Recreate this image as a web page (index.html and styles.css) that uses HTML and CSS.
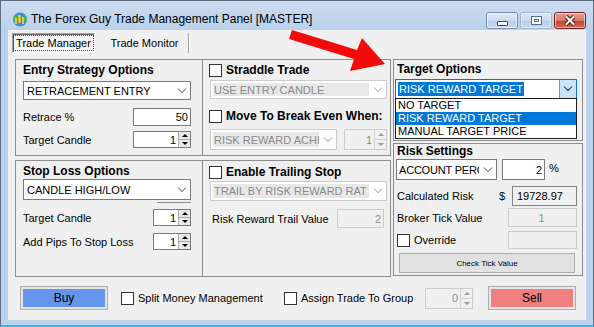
FILE: index.html
```html
<!doctype html>
<html lang="en">
  <head>
    <meta charset="UTF-8" />
    <title>The Forex Guy Trade Management Panel</title>
    <link rel="stylesheet" href="styles.css">
  </head>
  <body>
    <div class="window">
      <div class="titlebar">
        <svg class="app-icon" width="16" height="16" viewBox="0 0 16 16">
          <circle cx="8" cy="8.5" r="7" fill="#3f8fd0" />
          <path d="M2 6 Q6 3 9 5 Q12 7 14 5 L15 9 Q11 12 7 10 Q4 9 2 11 Z" fill="#4fb34a" />
          <rect x="3" y="7" width="2" height="6" fill="#f2c230" />
          <rect x="6.5" y="4" width="2" height="8" fill="#f7d548" />
          <rect x="10" y="6" width="2" height="7" fill="#f2c230" />
        </svg>
        <span class="title">The Forex Guy Trade Management Panel [MASTER]</span>
        <div class="caption">
          <span class="cbtn"><i class="glyph-min"></i></span>
          <span class="cbtn dim"><i class="glyph-max"></i></span>
          <span class="cbtn close">
            <svg width="14" height="11" viewBox="0 0 14 11">
              <path d="M3 1.5 L11 9.5 M11 1.5 L3 9.5" stroke="#4a1a18" stroke-width="4" />
              <path d="M3 1.5 L11 9.5 M11 1.5 L3 9.5" stroke="#fff" stroke-width="2" />
            </svg>
          </span>
        </div>
      </div>

      <div class="client">
        <div class="tabs">
          <span class="tab active"><span class="focus">Trade Manager</span></span>
          <span class="tab">Trade Monitor</span>
        </div>

        <div class="page">
          <div class="main">
            <div class="left">
              <!-- entry / straddle -->
              <div class="box split top">
                <div class="col entry">
                  <div class="heading">Entry Strategy Options</div>
                  <div class="combo c-entry"><span class="txt">RETRACEMENT ENTRY</span><span class="arr"></span></div>
                  <div class="row r-retrace">
                    <span>Retrace %</span>
                    <span class="tb w58">50</span>
                  </div>
                  <div class="row r-candle">
                    <span>Target Candle</span>
                    <span class="spin w58"><span class="val">1</span><span class="btns"><span class="up"></span><span class="down"></span></span></span>
                  </div>
                </div>
                <div class="col straddle">
                  <div class="chk-row"><span class="chk"></span><b>Straddle Trade</b></div>
                  <div class="combo dis c-wide"><span class="txt">USE ENTRY CANDLE</span><span class="arr"></span></div>
                  <div class="chk-row r-move"><span class="chk"></span><b>Move To Break Even When:</b></div>
                  <div class="row r-be">
                    <div class="combo dis c-be"><span class="txt">RISK REWARD ACHI</span><span class="arr"></span></div>
                    <span class="spin dis w43"><span class="val">1</span><span class="btns"><span class="up"></span><span class="down"></span></span></span>
                  </div>
                </div>
              </div>

              <!-- stop loss / trailing -->
              <div class="box split bottom">
                <div class="col stop">
                  <div class="heading">Stop Loss Options</div>
                  <div class="combo c-stop"><span class="txt">CANDLE HIGH/LOW</span><span class="arr"></span></div>
                  <div class="rule"></div>
                  <div class="row r-sl1">
                    <span>Target Candle</span>
                    <span class="spin w38"><span class="val">1</span><span class="btns"><span class="up"></span><span class="down"></span></span></span>
                  </div>
                  <div class="row r-sl2">
                    <span>Add Pips To Stop Loss</span>
                    <span class="spin w38"><span class="val">1</span><span class="btns"><span class="up"></span><span class="down"></span></span></span>
                  </div>
                </div>
                <div class="col trail">
                  <div class="chk-row"><span class="chk"></span><b>Enable Trailing Stop</b></div>
                  <div class="combo dis c-trail"><span class="txt">TRAIL BY RISK REWARD RAT</span><span class="arr"></span></div>
                  <div class="row r-trail">
                    <span class="lbl-trail">Risk Reward Trail Value</span>
                    <span class="tb dis w47">2</span>
                  </div>
                </div>
              </div>
            </div>

            <div class="right">
              <div class="box target">
                <div class="heading">Target Options</div>
                <div class="combo focused c-target">
                  <span class="txt"><span class="sel">RISK REWARD TARGET</span></span>
                  <span class="arr"></span>
                  <ul class="droplist">
                    <li>NO TARGET</li>
                    <li class="hot">RISK REWARD TARGET</li>
                    <li>MANUAL TARGET PRICE</li>
                  </ul>
                </div>
              </div>

              <div class="box risk">
                <div class="heading">Risk Settings</div>
                <div class="row r-acct">
                  <div class="combo c-acct"><span class="txt">ACCOUNT PERC</span><span class="arr"></span></div>
                  <span class="tb w43">2</span>
                  <span class="pct">%</span>
                </div>
                <div class="row r-calc">
                  <span>Calculated Risk</span>
                  <span class="dollar">$</span>
                  <span class="tb ro w65">19728.97</span>
                </div>
                <div class="row r-tick">
                  <span>Broker Tick Value</span>
                  <span class="tb dis center w69">1</span>
                </div>
                <div class="row r-over">
                  <span class="chk"></span><span class="lbl-over">Override</span>
                  <span class="tb dis w69"></span>
                </div>
                <div class="btn-small">Check Tick Value</div>
              </div>
            </div>
          </div>

          <div class="actions">
            <span class="btn buy"><span>Buy</span></span>
            <span class="opt split-mm"><span class="chk"></span>Split Money Management</span>
            <span class="opt assign"><span class="chk"></span>Assign Trade To Group</span>
            <span class="spin dis w48"><span class="val">0</span><span class="btns"><span class="up"></span><span class="down"></span></span></span>
            <span class="btn sell"><span>Sell</span></span>
          </div>
        </div>
      </div>

      <!-- callout arrow -->
      <svg class="arrow" width="594" height="327" viewBox="0 0 594 327">
        <polygon points="292,30 289,39 354,59 350,71 385,64 362,38 357,50" fill="#f50a0a" />
      </svg>
    </div>
  </body>
</html>
```

FILE: styles.css
```css
* {
  box-sizing: border-box;
}

body {
  margin: 0;
  background: #fff;
  font-family: "Liberation Sans", Arial, sans-serif;
  font-size: 11px;
  color: #000;
}

/* window frame */
.window {
  position: relative;
  width: 594px;
  height: 327px;
  border: 1px solid #5d6c80;
  border-bottom: 2px solid #22c4e2;
  background: linear-gradient(to bottom, #cbdcf0 0, #b9d1ea 30px, #b9d1ea 100%);
  padding: 0 7px 5px 7px;
  display: flex;
  flex-direction: column;
}

.titlebar {
  height: 29px;
  flex: none;
  display: flex;
  align-items: center;
  padding-top: 7px;
}

.app-icon {
  margin-left: 4px;
  flex: none;
}

.title {
  margin-left: 3px;
  font-size: 12px;
  color: #000;
}

.caption {
  margin-left: auto;
  display: flex;
  gap: 2px;
  margin-top: 2px;
}

.cbtn {
  width: 32px;
  height: 17px;
  border: 1px solid #7890b0;
  border-radius: 3px;
  background: linear-gradient(to bottom, #e3ecf7 0, #cbdaee 50%, #b8cde8 51%, #c9daef 100%);
  box-shadow: inset 0 0 0 1px rgba(255, 255, 255, 0.55);
  display: flex;
  align-items: center;
  justify-content: center;
}

.cbtn.dim {
  border-color: #9bb0cc;
  opacity: 0.85;
}

.cbtn.close {
  border-color: #6e2424;
  background: linear-gradient(to bottom, #e8a194 0, #d9786a 50%, #c4402f 51%, #d16a55 100%);
}

.glyph-min {
  display: block;
  width: 11px;
  height: 5px;
  margin-top: 6px;
  background: #fff;
  border: 1px solid #354763;
  border-radius: 1px;
}

.glyph-max {
  display: block;
  width: 11px;
  height: 9px;
  background: #fff;
  border: 1px solid #4a5c78;
  box-shadow: inset 0 0 0 2px #fff, inset 0 0 0 3px #4a5c78;
}

/* client area */
.client {
  flex: 1;
  background: #f0f0f0;
  display: flex;
  flex-direction: column;
}

.tabs {
  height: 24px;
  flex: none;
  display: flex;
  padding-top: 3px;
}

.tab {
  height: 20px;
  display: flex;
  align-items: center;
  justify-content: center;
  font-size: 11px;
}

.tab.active {
  width: 83px;
  margin-left: 4px;
  border: 1px solid;
  border-color: #a0a0a0 #fff #fff #a0a0a0;
  box-shadow: inset 1px 1px 0 #696969;
  background: #f4f4f4;
}

.tab.active .focus {
  outline: 1px dotted #444;
  outline-offset: 1px;
  padding: 0 1px;
}

.tab:not(.active) {
  width: 88px;
  margin-left: 6px;
  border-right: 1px solid #a0a0a0;
  box-shadow: 1px 0 0 #fff;
}

.page {
  padding: 5px 0 0 7px;
}

.main {
  display: grid;
  grid-template-columns: 376px 190px;
  column-gap: 2px;
}

.left {
  display: flex;
  flex-direction: column;
  gap: 4px;
}

.right {
  display: flex;
  flex-direction: column;
  gap: 2px;
}

.box {
  border: 1px solid #8c8c8c;
}

.box.split {
  display: grid;
  grid-template-columns: 186px 1fr;
}

.box.split .col + .col {
  border-left: 1px solid #8c8c8c;
}

.box.top {
  height: 97px;
}

.box.bottom {
  height: 117px;
}

.heading {
  font-size: 12px;
  font-weight: bold;
  line-height: 14px;
  height: 14px;
  white-space: nowrap;
}

.row {
  display: flex;
  align-items: center;
  justify-content: space-between;
}

.chk-row {
  height: 14px;
  display: flex;
  align-items: center;
}

.chk-row b {
  font-size: 12px;
  margin-left: 4px;
  white-space: nowrap;
}

.chk {
  width: 13px;
  height: 13px;
  flex: none;
  border: 1px solid #333;
  background: #fff;
}

/* combo boxes */
.combo {
  display: flex;
  align-items: stretch;
  border: 1px solid #7a7a7a;
  background: #fff;
  white-space: nowrap;
}

.combo .txt {
  flex: 1;
  min-width: 0;
  overflow: hidden;
  display: flex;
  align-items: center;
  padding-left: 3px;
}

.combo .arr {
  width: 17px;
  flex: none;
  display: flex;
  align-items: center;
  justify-content: center;
}

.combo .arr::after {
  content: "";
  width: 5px;
  height: 5px;
  margin-top: -4px;
  border-right: 1px solid #7c7c7c;
  border-bottom: 1px solid #7c7c7c;
  transform: rotate(45deg);
}

.combo.dis {
  border-color: #cccccc;
}

.combo.dis .txt {
  margin: 2px 0 2px 2px;
  padding-left: 1px;
  background: #e8e8e8;
  color: #8a8a8a;
}

.combo.dis .arr::after {
  border-color: #b8b8b8;
}

.combo.focused {
  position: relative;
  border-color: #0078d7;
}

.combo.focused .txt {
  padding-left: 2px;
}

.combo.focused .sel {
  background: #0078d7;
  color: #fff;
  padding: 1px 1px;
}

.combo.focused .arr {
  background: #cce4f7;
  border-left: 1px solid #569de5;
}

.combo.focused .arr::after {
  border-color: #333;
}

.droplist {
  position: absolute;
  top: 100%;
  left: -1px;
  right: -1px;
  margin: 0;
  padding: 0;
  list-style: none;
  background: #fff;
  border: 1px solid #1d1d1d;
  z-index: 5;
}

.droplist li {
  height: 13px;
  line-height: 13px;
  padding-left: 2px;
}

.droplist li.hot {
  background: #0078d7;
  color: #fff;
}

/* text boxes and spinners */
.tb {
  height: 100%;
  display: flex;
  align-items: center;
  justify-content: flex-end;
  padding-right: 2px;
  border: 1px solid #7a7a7a;
  background: #fff;
}

.tb.ro {
  justify-content: flex-start;
  padding-left: 4px;
  background: #f0f0f0;
  border-color: #828282;
}

.tb.dis {
  background: #f0f0f0;
  border-color: #cccccc;
  color: #8a8a8a;
}

.tb.center {
  justify-content: center;
}

.spin {
  height: 100%;
  display: flex;
  border: 1px solid #7a7a7a;
  background: #fff;
}

.spin .val {
  flex: 1;
  display: flex;
  align-items: center;
  justify-content: flex-end;
  padding-right: 2px;
}

.spin .btns {
  width: 12px;
  display: flex;
  flex-direction: column;
  border-left: 1px solid #adadad;
}

.spin .up,
.spin .down {
  flex: 1;
  background: #e8e8e8;
  display: flex;
  align-items: center;
  justify-content: center;
}

.spin .up {
  border-bottom: 1px solid #adadad;
}

.spin .up::after,
.spin .down::after {
  content: "";
  border-left: 3px solid transparent;
  border-right: 3px solid transparent;
}

.spin .up::after {
  border-bottom: 3px solid #000;
}

.spin .down::after {
  border-top: 3px solid #000;
}

.spin.dis {
  border-color: #cccccc;
  background: #f0f0f0;
  color: #8a8a8a;
}

.spin.dis .btns {
  border-left-color: #d4d4d4;
}

.spin.dis .up,
.spin.dis .down {
  background: #f0f0f0;
}

.spin.dis .up {
  border-bottom-color: #d4d4d4;
}

.spin.dis .up::after {
  border-bottom-color: #9a9a9a;
}

.spin.dis .down::after {
  border-top-color: #9a9a9a;
}

.w38 { width: 38px; }
.w43 { width: 43px; }
.w47 { width: 47px; }
.w48 { width: 48px; }
.w58 { width: 58px; }
.w65 { width: 65px; }
.w69 { width: 69px; }

/* entry column */
.entry {
  padding: 3px 11px 0 7px;
}

.c-entry {
  margin-top: 4px;
  height: 19px;
}

.r-retrace {
  margin-top: 8px;
  height: 18px;
}

.r-candle {
  margin-top: 5px;
  height: 17px;
}

/* straddle column */
.straddle {
  padding: 3px 0 0 6px;
}

.c-wide {
  margin-top: 3px;
  margin-left: 1px;
  width: 177px;
  height: 19px;
}

.r-move {
  margin-top: 10px;
}

.r-be {
  margin-top: 6px;
  height: 21px;
  justify-content: flex-start;
}

.c-be {
  width: 127px;
  height: 100%;
  margin-left: 1px;
}

.r-be .spin {
  margin-left: 7px;
}

/* stop loss column */
.stop {
  padding: 3px 11px 0 7px;
}

.c-stop {
  margin-top: 1px;
  height: 21px;
}

.rule {
  width: 34px;
  height: 1px;
  margin: 2px 0 0 auto;
  background: #8c8c8c;
}

.r-sl1 {
  margin-top: 6px;
  height: 17px;
}

.r-sl2 {
  margin-top: 7px;
  height: 17px;
}

/* trailing column */
.trail {
  padding: 4px 0 0 6px;
}

.c-trail {
  margin-top: 2px;
  margin-left: 1px;
  width: 177px;
  height: 20px;
}

.r-trail {
  margin-top: 8px;
  height: 19px;
  padding-right: 6px;
}

.lbl-trail {
  margin-left: 3px;
}

/* target options */
.box.target {
  height: 82px;
  padding: 2px 5px 0 1px;
}

.box.target .heading,
.box.risk .heading {
  margin-left: 2px;
}

.c-target {
  margin-top: 3px;
  height: 20px;
}

/* risk settings */
.box.risk {
  height: 133px;
  padding: 0 5px 0 1px;
}

.r-acct {
  margin-top: 1px;
  height: 21px;
  justify-content: flex-start;
}

.c-acct {
  width: 101px;
  height: 100%;
  margin-left: 1px;
}

.c-acct .txt {
  padding-left: 2px;
  letter-spacing: -0.2px;
}

.r-acct .tb {
  margin-left: 5px;
}

.pct {
  margin-left: 4px;
  margin-top: -4px;
}

.r-calc {
  margin-top: 6px;
  height: 20px;
  padding-left: 2px;
}

.dollar {
  margin-left: auto;
  margin-right: 7px;
}

.r-tick {
  margin-top: 2px;
  height: 19px;
  padding-left: 2px;
}

.r-over {
  margin-top: 4px;
  height: 18px;
  padding-left: 2px;
}

.lbl-over {
  margin-left: 4px;
  margin-right: auto;
}

.btn-small {
  margin: 4px 0 0 4px;
  width: 176px;
  height: 20px;
  border: 1px solid #adadad;
  background: #e1e1e1;
  font-size: 8px;
  display: flex;
  align-items: center;
  justify-content: center;
}

/* bottom actions */
.actions {
  margin-top: 9px;
  height: 24px;
  display: flex;
  align-items: center;
}

.btn {
  width: 88px;
  height: 24px;
  border: 1px solid #adadad;
  padding: 2px;
  background: #e5e5e5;
  display: flex;
}

.btn span {
  flex: 1;
  display: flex;
  align-items: center;
  justify-content: center;
  font-size: 12px;
}

.buy {
  margin-left: 5px;
}

.buy span {
  background: #6495ed;
}

.sell {
  margin-left: 15px;
}

.sell span {
  background: #f08080;
}

.opt {
  display: flex;
  align-items: center;
  white-space: nowrap;
  font-size: 11px;
}

.opt .chk {
  margin-right: 4px;
}

.split-mm {
  margin-left: 13px;
  width: 163px;
}

.assign {
  width: 141px;
}

.actions .spin {
  height: 21px;
}

.arrow {
  position: absolute;
  left: -1px;
  top: -1px;
  pointer-events: none;
}
```
